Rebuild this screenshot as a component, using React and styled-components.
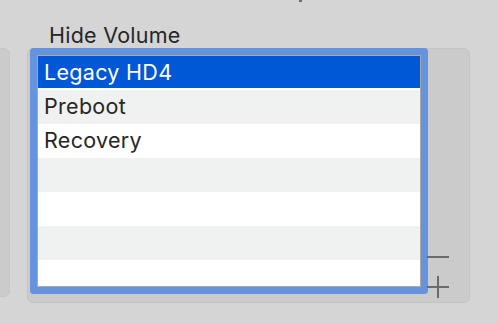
import React from 'react';
import styled, { createGlobalStyle } from 'styled-components';

const GlobalStyle = createGlobalStyle`
  html, body {
    margin: 0;
    padding: 0;
    background: #d5d5d5;
    font-family: Inter, "Liberation Sans", Arial, sans-serif;
    overflow: hidden;
  }
`;

const Page = styled.div`
  position: relative;
  width: 498px;
  height: 324px;
  background: #d5d5d5;
  overflow: hidden;
`;

const TopMark = styled.div`
  position: absolute;
  left: 299px;
  top: 0;
  width: 3px;
  height: 2px;
  background: #6e6e6e;
`;

const Label = styled.div`
  margin: 0;
  padding: 22px 0 0 49px;
  height: 26px;
  font-size: 21.5px;
  letter-spacing: 0.25px;
  line-height: 26px;
  color: #262626;
`;

const Row = styled.div`
  display: flex;
  align-items: flex-start;
`;

const SidePanel = styled.div`
  margin-left: -31px;
  width: 39px;
  height: 247px;
  border: 1px solid #c6c6c6;
  border-radius: 6px;
  background: #cbcbcb;
`;

const GroupBox = styled.div`
  margin-left: 17px;
  width: 432px;
  height: 247px;
  box-sizing: content-box;
  border: 1px solid #c4c4c4;
  border-radius: 6px;
  background: #cbcbcb;
  display: flex;
  align-items: flex-end;
  padding: 6px 0 0 9px;
`;

const List = styled.div`
  align-self: flex-start;
  width: 382px;
  height: 230px;
  border: 1px solid #a9a9a9;
  background: #ffffff;
  box-shadow: 0 0 0 7px #6593dd;
  border-radius: 1px;
  overflow: hidden;
  display: flex;
  flex-direction: column;
`;

const Item = styled.div`
  flex: 0 0 34px;
  height: 34px;
  box-sizing: border-box;
  padding: 0 0 0 6px;
  font-size: 21.5px;
  letter-spacing: 0.3px;
  line-height: 32px;
  color: ${p => (p.$selected ? '#ffffff' : '#262626')};
  background: ${p =>
    p.$selected
      ? 'linear-gradient(#0158d7 0 32px, #ffffff 32px 34px)'
      : p.$striped
      ? '#f0f2f1'
      : '#ffffff'};
  white-space: nowrap;
`;

const Buttons = styled.div`
  display: flex;
  flex-direction: column;
  margin: 0 0 4px 6px;
  width: 22px;
`;

const ButtonBox = styled.div`
  width: 22px;
  height: 22px;
  display: flex;
  align-items: center;
  justify-content: center;
  color: #6a6a6a;
`;

const Spacer = styled.div`
  height: 8px;
`;

const items = ['Legacy HD4', 'Preboot', 'Recovery', '', '', '', ''];

const Minus = () => (
  <svg width="22" height="22" viewBox="0 0 22 22">
    <rect x="0" y="10" width="22" height="2" fill="currentColor" />
  </svg>
);

const Plus = () => (
  <svg width="22" height="22" viewBox="0 0 22 22">
    <rect x="0" y="10" width="22" height="2" fill="currentColor" />
    <rect x="10" y="0" width="2" height="22" fill="currentColor" />
  </svg>
);

export default function App() {
  return (
    <Page>
      <GlobalStyle />
      <TopMark />
      <Label>Hide Volume</Label>
      <Row>
        <SidePanel />
        <GroupBox>
          <List>
            {items.map((name, i) => (
              <Item key={i} $selected={i === 0} $striped={i % 2 === 1}>
                {name}
              </Item>
            ))}
          </List>
          <Buttons>
            <ButtonBox>
              <Minus />
            </ButtonBox>
            <Spacer />
            <ButtonBox>
              <Plus />
            </ButtonBox>
          </Buttons>
        </GroupBox>
      </Row>
    </Page>
  );
}
